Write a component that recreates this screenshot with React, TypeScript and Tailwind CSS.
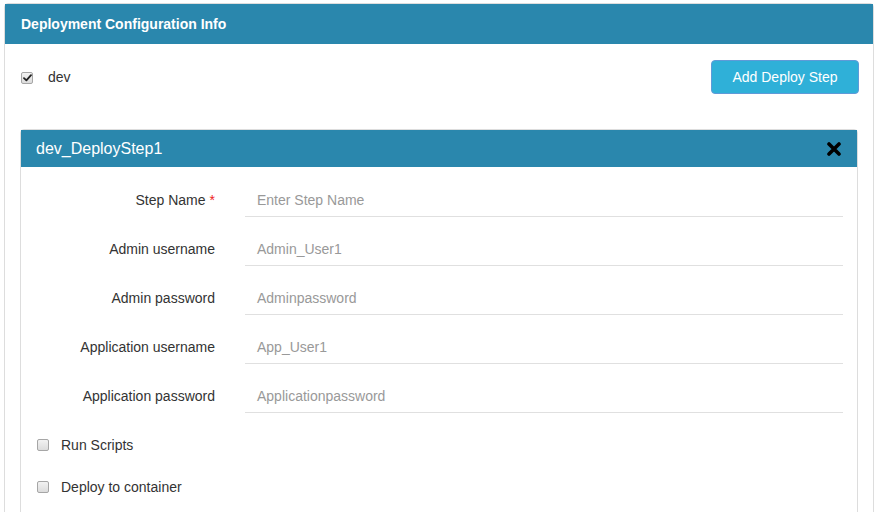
import React from 'react';

const font = { fontFamily: '"Liberation Sans", Arial, sans-serif' };

function Check({ checked = false }: { checked?: boolean }) {
  return (
    <span className="flex h-[12px] w-[12px] shrink-0 items-center justify-center rounded-[2px] border border-[#a6a6a6] bg-gradient-to-b from-[#f2f2f2] to-[#dcdcdc]">
      {checked && (
        <svg width="9" height="8" viewBox="0 0 9 8">
          <path d="M1 4.2 L3.4 6.4 L8 1.2" fill="none" stroke="#222" strokeWidth="1.8" strokeLinecap="round" strokeLinejoin="round" />
        </svg>
      )}
    </span>
  );
}

const fields = [
  { label: 'Step Name', placeholder: 'Enter Step Name', required: true },
  { label: 'Admin username', placeholder: 'Admin_User1' },
  { label: 'Admin password', placeholder: 'Adminpassword' },
  { label: 'Application username', placeholder: 'App_User1' },
  { label: 'Application password', placeholder: 'Applicationpassword' },
];

export default function App() {
  return (
    <div className="min-h-screen bg-white text-[14px] text-[#333]" style={font}>
      <div className="ml-[4px] mt-[3px] w-[870px] rounded-t-[4px] border border-[#ddd]">
        {/* outer header */}
        <div className="flex h-[40px] items-center bg-[#2a87ad] pl-[16px] text-[14px] font-bold text-white">
          Deployment Configuration Info
        </div>

        <div className="pb-[40px] pl-[15px] pr-[15px] pt-[16px]">
          <div className="flex h-[34px] items-center">
            <div className="ml-[1px] mt-[1px]">
              <Check checked />
            </div>
            <span className="ml-[15px] mt-[1px]">dev</span>
            <button className="-mr-[1px] ml-auto h-[34px] w-[148px] rounded-[4px] border border-[#5f9ad8] bg-[#2fb0d8] text-[14px] text-white">
              Add Deploy Step
            </button>
          </div>

          {/* deploy step panel */}
          <div className="mt-[35px] rounded-t-[4px] border border-[#ddd]">
            <div className="flex h-[37px] items-center bg-[#2a87ad] pl-[15px] pr-[16px] text-[16px] text-white">
              <span>dev_DeployStep1</span>
              <svg className="ml-auto" width="14" height="14" viewBox="0 0 14 14">
                <path d="M2 2 L12 12 M12 2 L2 12" stroke="#000" strokeWidth="3.6" strokeLinecap="round" />
              </svg>
            </div>

            <div className="pb-[60px] pt-[16px]">
              {fields.map((f) => (
                <div key={f.label} className="mb-[15px] flex items-center">
                  <label className="w-[194px] shrink-0 text-right">
                    {f.label}
                    {f.required && <span className="ml-[4px] text-[#e22]">*</span>}
                  </label>
                  <div className="ml-[30px] mr-[14px] flex h-[34px] flex-1 items-center border-b border-[#e0e0e0] pl-[12px] pt-[2px] text-[#999]">
                    {f.placeholder}
                  </div>
                </div>
              ))}

              <div className="ml-[16px] mt-[22px] flex h-[20px] items-center">
                <Check />
                <span className="ml-[12px]">Run Scripts</span>
              </div>
              <div className="ml-[16px] mt-[22px] flex h-[20px] items-center">
                <Check />
                <span className="ml-[12px]">Deploy to container</span>
              </div>
            </div>
          </div>
        </div>
      </div>
    </div>
  );
}
